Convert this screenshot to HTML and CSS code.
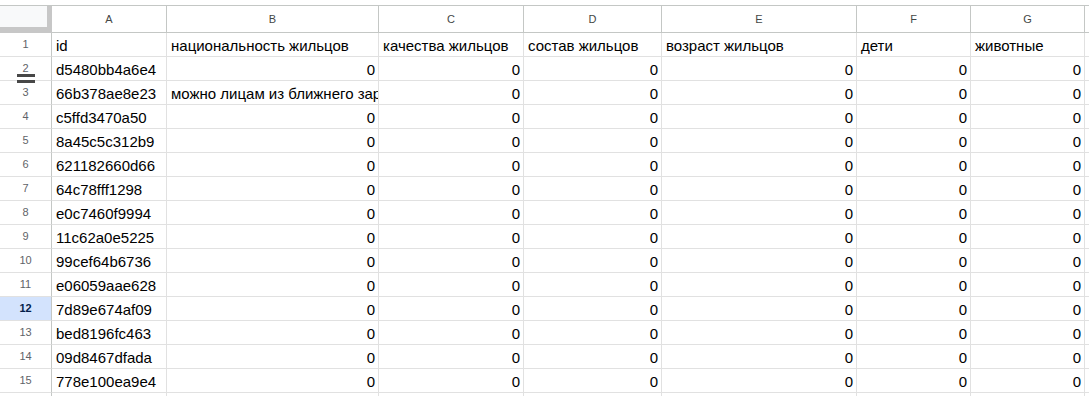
FILE: index.html
```html
<!DOCTYPE html>
<html lang="ru">
<head>
  <meta charset="UTF-8" />
  <meta name="viewport" content="width=device-width, initial-scale=1.0"/>
  <title>Sheet</title>
  <link rel="stylesheet" href="styles.css">
</head>
<body>
  <div class="wrap">
    <div id="sheet" class="sheet"></div>
    <div class="handle handle-top"></div>
    <div class="handle handle-bottom"></div>
  </div>

  <script>
    const letters = ["A", "B", "C", "D", "E", "F", "G", ""];
    const header = ["id", "национальность жильцов", "качества жильцов", "состав жильцов", "возраст жильцов", "дети", "животные", ""];
    const ids = [
      "d5480bb4a6e4", "66b378ae8e23", "c5ffd3470a50", "8a45c5c312b9",
      "621182660d66", "64c78fff1298", "e0c7460f9994", "11c62a0e5225",
      "99cef64b6736", "e06059aae628", "7d89e674af09", "bed8196fc463",
      "09d8467dfada", "778e100ea9e4"
    ];

    const sheet = document.getElementById("sheet");

    function cell(cls, text) {
      const div = document.createElement("div");
      div.className = cls;
      div.textContent = text;
      sheet.appendChild(div);
    }

    // column header row
    cell("corner", "");
    letters.forEach(l => cell("col-head", l));

    // row 1: titles
    cell("row-head", "1");
    header.forEach(h => cell("cell", h));

    // data rows
    ids.forEach((id, i) => {
      const n = i + 2;
      cell(n === 12 ? "row-head selected" : "row-head", String(n));
      cell("cell", id);
      for (let c = 1; c < 7; c++) {
        if (n === 3 && c === 1) {
          cell("cell", "можно лицам из ближнего зарубежья");
        } else {
          cell("cell num", "0");
        }
      }
      cell("cell", "");
    });

    // top edge of the next row, only its border shows
    cell("row-head", "");
    for (let c = 0; c < 8; c++) cell("cell", "");
  </script>
</body>
</html>
```

FILE: styles.css
```css
body {
  margin: 0;
  background: white;
  font-family: "Liberation Sans", Arial, sans-serif;
  overflow: hidden;
  height: 396px;
}

.wrap {
  position: relative;
  padding-top: 5px;
}

.sheet {
  display: grid;
  grid-template-columns: 52px 115px 212px 145px 138px 195px 114px 114px 1fr;
  grid-template-rows: 27px;
  grid-auto-rows: 24px;
  border-top: 1px solid #c4c7c5;
}

.sheet > div {
  box-sizing: border-box;
  overflow: hidden;
  white-space: nowrap;
}

.corner {
  background: #f8f9fa;
  border-right: 5px solid #c7c7c7;
  border-bottom: 6px solid #c7c7c7;
}

.col-head {
  border-right: 1px solid #c4c7c5;
  border-bottom: 1px solid #c4c7c5;
  color: #444746;
  font-size: 11px;
  line-height: 26px;
  text-align: center;
}

.row-head {
  border-right: 1px solid #c4c7c5;
  border-bottom: 1px solid #e1e1e1;
  color: #5f6368;
  font-size: 11px;
  line-height: 23px;
  text-align: center;
}

.row-head.selected {
  background: #d3e3fd;
  color: #041e49;
  font-weight: bold;
}

.cell {
  border-right: 1px solid #e1e1e1;
  border-bottom: 1px solid #e1e1e1;
  color: #000;
  font-size: 15px;
  line-height: 21px;
  padding: 2px 3px 0 4px;
}

.num {
  text-align: right;
}

.handle {
  position: absolute;
  left: 17px;
  width: 18px;
  height: 3px;
  background: #474747;
}

.handle-top {
  top: 74px;
}

.handle-bottom {
  top: 80px;
}
```
